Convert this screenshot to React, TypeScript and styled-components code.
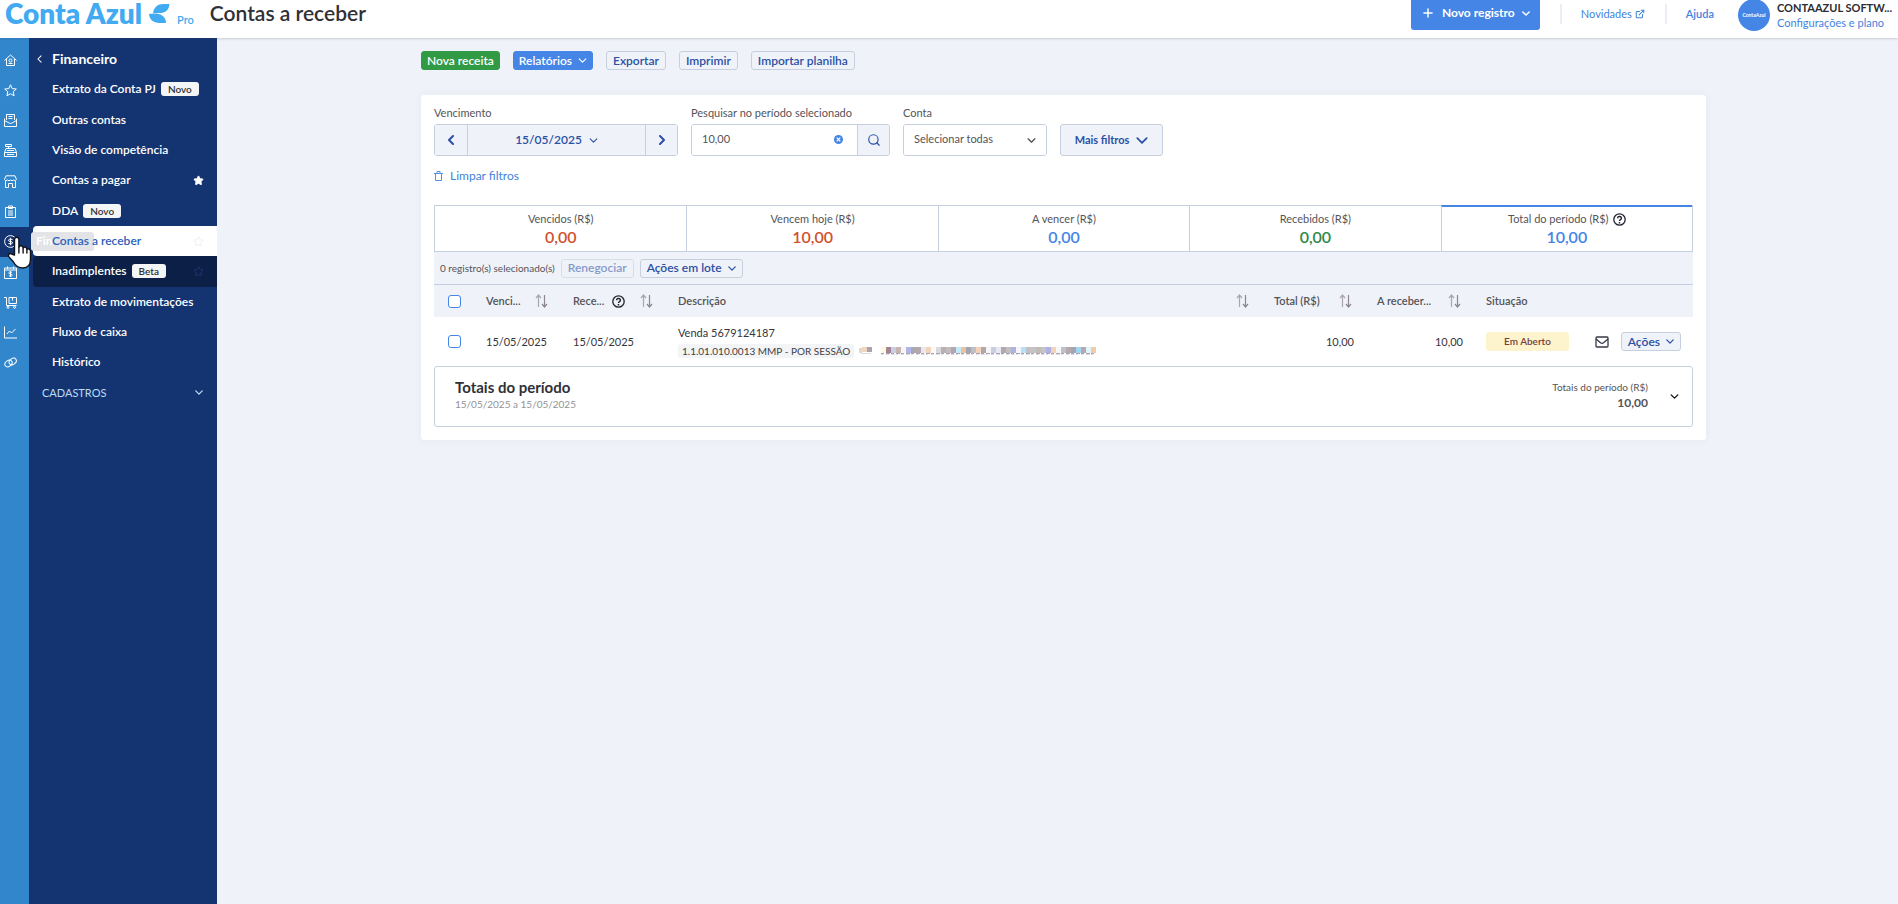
import React from "react";
import styled, { createGlobalStyle } from "styled-components";
import { ExternalLink, Plus, Search, Star } from "lucide-react";

const c = {
  rail: "#3287cc",
  navy: "#143371",
  navyDark: "#0c1f47",
  page: "#eff2f8",
  line: "#c6cfde",
  blue: "#4585e6",
  link: "#3f83dd",
  ink: "#2b50a5",
  text: "#545459",
  dark: "#35353a",
  green: "#319a45",
  red: "#d0522f",
};

const Global = createGlobalStyle`
  *, *::before, *::after { box-sizing: border-box; }
  body { margin: 0; background: ${c.page}; }
  body, button, input, select { font-family: Lato, "Liberation Sans", sans-serif; font-size: 12px; line-height: 16px; }
  body { color: ${c.text}; }
  button { cursor: pointer; padding: 0; }
  svg { flex: none; display: block; }
  a { color: ${c.link}; text-decoration: none; }
`;

const Page = styled.div`
  display: flex;
  flex-direction: column;
  min-height: 100vh;
`;
const Header = styled.header`
  display: flex;
  align-items: center;
  height: 38px;
  padding: 0 8px 12px 5px;
  background: #fff;
  box-shadow: 0 1px 2px rgba(60, 70, 90, 0.2);
  position: relative;
  z-index: 2;
`;
const Logo = styled.a`
  display: flex;
  align-items: center;
  gap: 7px;
  color: #41aaf0;
  font-size: 28px;
  line-height: 26px;
  font-weight: 800;
`;
const Plan = styled.span`
  align-self: flex-end;
  margin: 0 16px 0 7px;
  color: #41aaf0;
  font-weight: 600;
  line-height: 12px;
  font-size: 11px;
`;
const Title = styled.h1`
  flex: 1;
  margin: 0;
  color: #303036;
  font-size: 21px;
  line-height: 26px;
  font-weight: 600;
`;
const NewButton = styled.button`
  display: flex;
  align-items: center;
  justify-content: center;
  align-self: flex-start;
  flex: none;
  gap: 7px;
  width: 129px;
  height: 30px;
  padding-bottom: 4px;
  border: 0;
  border-radius: 0 0 3px 3px;
  background: ${c.blue};
  color: #fff;
  font-weight: 700;
`;
const HeaderLinks = styled.nav`
  display: flex;
  align-items: center;
  margin: 2px 24px 0 20px;
  height: 20px;
  font-size: 11px;
  a {
    display: flex;
    align-items: center;
    gap: 3px;
    padding-left: 19px;
    border-left: 2px solid #e9eef5;
    height: 20px;
  }
  a + a { margin-left: 20px; font-weight: 600; }
`;
const User = styled.div`
  display: flex;
  align-items: center;
  align-self: flex-start;
  gap: 7px;
  height: 30px;
`;
const Avatar = styled.span`
  display: grid;
  place-items: center;
  width: 32px;
  height: 32px;
  border-radius: 50%;
  background: ${c.blue};
  color: #fff;
  font-size: 5px;
  font-weight: 700;
`;
const UserText = styled.div`
  display: flex;
  flex-direction: column;
  font-size: 11px;
  line-height: 15px;
  width: 113px;
  white-space: nowrap;
  strong { color: #2c2c32; }
`;

const Body = styled.div`
  display: flex;
  flex: 1;
`;
const Rail = styled.nav`
  display: flex;
  flex-direction: column;
  width: 29px;
  padding-top: 7px;
  background: ${c.rail};
`;
const RailList = styled.div`
  display: grid;
  grid-auto-rows: 1fr;
  height: 333px;
`;
const RailButton = styled.button<{ $active?: boolean }>`
  display: flex;
  align-items: center;
  padding-left: 4px;
  border: 0;
  background: ${(p) => (p.$active ? c.navy : "transparent")};
  position: relative;
`;
const Tip = styled.span`
  position: absolute;
  left: 31px;
  top: 5px;
  z-index: 1;
  width: 63px;
  height: 19px;
  padding: 1px 5px;
  border-radius: 3px;
  background: #e2e4e8;
  color: #fff;
  font-weight: 700;
  text-align: left;
`;
const Pointer = styled.span`
  position: absolute;
  left: 7px;
  top: 9px;
  z-index: 4;
`;
const Side = styled.aside`
  width: 188px;
  padding-top: 6px;
  background: ${c.navy};
  color: #fff;
`;
const SideList = styled.div`
  display: grid;
  grid-auto-rows: 1fr;
  height: 364px;
`;
const SideHead = styled.button`
  display: flex;
  align-items: center;
  gap: 10px;
  padding-left: 8px;
  border: 0;
  background: none;
  color: #fff;
  font-size: 14px;
  font-weight: 700;
`;
const SideLink = styled.a<{ $tone?: "active" | "hover" }>`
  display: flex;
  align-items: center;
  gap: 5px;
  margin-left: 4px;
  padding: 0 13px 0 19px;
  border-radius: 4px 0 0 4px;
  background: ${(p) => (p.$tone === "active" ? "#fff" : p.$tone === "hover" ? c.navyDark : "none")};
  color: ${(p) => (p.$tone === "active" ? "#2c62b8" : "#fff")};
  font-weight: 600;
  white-space: nowrap;
  > span:first-child { position: relative; z-index: 2; }
  > svg { margin-left: auto; }
`;
const Pill = styled.span`
  padding: 0 7px;
  border-radius: 3px;
  background: #f4f5f7;
  color: #333;
  font-size: 10px;
  line-height: 14px;
  font-weight: 600;
`;
const SideGroup = styled.button`
  display: flex;
  align-items: center;
  justify-content: space-between;
  padding: 0 14px 0 13px;
  border: 0;
  background: none;
  color: #b9dcf8;
  font-size: 11px;
`;

const Main = styled.main`
  flex: 1;
  min-width: 0;
  padding: 13px 192px 13px 204px;
`;
const Toolbar = styled.div`
  display: flex;
  gap: 13px;
  margin-bottom: 25px;
`;
const Btn = styled.button<{ $kind?: "green" | "blue"; $muted?: boolean }>`
  display: inline-flex;
  align-items: center;
  justify-content: center;
  gap: 6px;
  height: 19px;
  padding: 0 ${(p) => (p.$kind ? 5 : 6)}px;
  border: 1px solid ${(p) => (p.$kind === "green" ? c.green : p.$kind === "blue" ? c.blue : c.line)};
  border-radius: 3px;
  background: ${(p) => (p.$kind === "green" ? c.green : p.$kind === "blue" ? c.blue : c.page)};
  color: ${(p) => (p.$kind ? "#fff" : c.ink)};
  font-weight: 600;
  opacity: ${(p) => (p.$muted ? 0.55 : 1)};
  white-space: nowrap;
`;
const Card = styled.section`
  padding: 10px 13px 13px;
  border-radius: 3px;
  background: #fff;
  box-shadow: 0 0 8px rgba(60, 80, 120, 0.06);
`;
const Filters = styled.div`
  display: flex;
  align-items: flex-end;
  gap: 13px;
`;
const Field = styled.div<{ $w: number }>`
  display: flex;
  flex-direction: column;
  gap: 3px;
  width: ${(p) => p.$w}px;
  font-size: 11px;
`;
const Group = styled.div`
  display: flex;
  height: 32px;
  border: 1px solid ${c.line};
  border-radius: 3px;
  overflow: hidden;
  position: relative;
`;
const Cell = styled.button<{ $grow?: boolean }>`
  display: flex;
  align-items: center;
  justify-content: center;
  gap: 7px;
  flex: ${(p) => (p.$grow ? "1" : "0 0 32px")};
  border: 0;
  background: ${c.page};
  color: ${c.ink};
  font-weight: 600;
  & + & { border-left: 1px solid ${c.line}; }
  input ~ & { border-left: 1px solid ${c.line}; }
`;
const TextInput = styled.input`
  flex: 1;
  min-width: 0;
  padding: 0 10px 2px;
  border: 0;
  outline: 0;
  color: ${c.text};
  font-size: 11px;
`;
const Clear = styled.button`
  position: absolute;
  right: 46px;
  top: 10px;
  border: 0;
  background: none;
`;
const Select = styled.select`
  flex: 1;
  padding: 0 10px 2px;
  appearance: none;
  border: 0;
  background: #fff;
  color: ${c.text};
  font-size: 11px;
`;
const Caret = styled.span`
  position: absolute;
  right: 10px;
  top: 13px;
  pointer-events: none;
`;
const More = styled.button`
  display: flex;
  align-items: center;
  justify-content: center;
  gap: 7px;
  width: 103px;
  height: 32px;
  border: 1px solid ${c.line};
  border-radius: 3px;
  background: ${c.page};
  color: ${c.ink};
  font-size: 11px;
  font-weight: 700;
`;
const Reset = styled.a`
  display: inline-flex;
  align-items: center;
  gap: 7px;
  margin: 12px 0 21px;
`;

const Summary = styled.div`
  display: grid;
  grid-template-columns: repeat(5, 1fr);
  border: 1px solid ${c.line};
  border-top: 0;
`;
const Tile = styled.button<{ $tint: string; $on?: boolean }>`
  display: flex;
  flex-direction: column;
  align-items: center;
  height: 46px;
  padding-top: ${(p) => (p.$on ? 4 : 5)}px;
  border: 0;
  border-top: ${(p) => (p.$on ? `2px solid ${c.blue}` : `1px solid ${c.line}`)};
  background: #fff;
  color: ${c.text};
  font-size: 11px;
  & + & { border-left: 1px solid ${c.line}; }
  span { display: flex; align-items: center; gap: 4px; }
  strong { color: ${(p) => p.$tint}; font-size: 16px; line-height: 20px; font-weight: 600; }
`;
const Batch = styled.div`
  display: flex;
  align-items: center;
  gap: 6px;
  height: 33px;
  padding-left: 6px;
  border-bottom: 1px solid ${c.line};
  background: ${c.page};
  font-size: 10px;
`;
const Table = styled.table`
  width: 100%;
  table-layout: fixed;
  border-collapse: collapse;
  font-size: 11px;
`;
const Col = styled.col<{ $w?: number }>`
  width: ${(p) => (p.$w ? `${p.$w}px` : "auto")};
`;
const Th = styled.th`
  height: 32px;
  padding: 0 14px 0 11px;
  background: ${c.page};
  text-align: left;
  font-size: 11px;
  font-weight: 600;
  white-space: nowrap;
`;
const HeadCell = styled.div`
  display: flex;
  align-items: center;
  gap: 8px;
  > svg:last-child { margin-left: auto; }
`;
const Td = styled.td<{ $right?: boolean }>`
  height: 49px;
  padding: 0 12px 0 11px;
  color: ${c.dark};
  text-align: ${(p) => (p.$right ? "right" : "left")};
`;
const Check = styled.input`
  display: block;
  appearance: none;
  width: 13px;
  height: 13px;
  margin: 0 3px;
  border: 1px solid ${c.blue};
  border-radius: 3px;
  background: #fff;
`;
const TagRow = styled.div`
  display: flex;
  align-items: center;
  gap: 5px;
  margin-top: 3px;
`;
const Tag = styled.span`
  padding: 0 4px;
  border-radius: 3px;
  background: #f3f4f6;
  color: #3f3f44;
  font-size: 10px;
  line-height: 14px;
`;
const Status = styled.span`
  display: block;
  width: 83px;
  border-radius: 3px;
  background: #fdf4ce;
  color: #74403a;
  font-size: 10px;
  font-weight: 600;
  line-height: 19px;
  text-align: center;
`;
const Actions = styled.div`
  display: flex;
  align-items: center;
  justify-content: flex-end;
  gap: 12px;
`;
const Plain = styled.button`
  border: 0;
  background: none;
`;
const Totals = styled.section`
  display: flex;
  align-items: center;
  height: 61px;
  padding: 0 13px 0 20px;
  border: 1px solid ${c.line};
  border-radius: 3px;
  h2 { margin: 0; color: #303036; font-size: 15px; line-height: 18px; font-weight: 700; }
`;
const TotalsHead = styled.div`
  display: flex;
  flex-direction: column;
  padding-bottom: 4px;
`;
const Period = styled.span`
  color: #929296;
  font-size: 10px;
`;
const TotalsValue = styled.div`
  display: flex;
  flex-direction: column;
  align-items: flex-end;
  margin: 0 22px 0 auto;
  padding-bottom: 4px;
  font-size: 10px;
  strong { font-size: 12px; }
`;

type Turn = "down" | "left" | "right";
const chevron: Record<Turn, { box: [number, number]; d: string }> = {
  down: { box: [10, 6], d: "M1 1l4 4 4-4" },
  left: { box: [6, 10], d: "M5 1 1 5l4 4" },
  right: { box: [6, 10], d: "M1 1l4 4-4 4" },
};
const Chevron = ({ to = "down", scale = 9, weight = 1.3 }: { to?: Turn; scale?: number; weight?: number }) => {
  const { box, d } = chevron[to];
  return (
    <svg
      width={Math.round((box[0] * scale) / 10)}
      height={Math.round((box[1] * scale) / 10)}
      viewBox={`0 0 ${box[0]} ${box[1]}`}
      fill="none"
      stroke="currentColor"
      strokeWidth={weight}
      strokeLinecap="round"
      strokeLinejoin="round"
      aria-hidden="true"
    >
      <path d={d} />
    </svg>
  );
};

const Leaf = () => (
  <svg width="21" height="19" viewBox="0 0 21 19" fill="#41aaf0" aria-hidden="true">
    <path d="M20.500 0H14C9 0 5 3 4 9h7.500C17 9 20 5.500 20.500 0Z" />
    <path d="M0 10c4-.8 9-.8 12 .8 3 1.600 5 4.200 5 8.200H10.500C4 19 .5 15.500 0 10Z" />
  </svg>
);

const Help = ({ size = 13 }: { size?: number }) => (
  <svg width={size} height={size} viewBox="0 0 13 13" fill="none" stroke="#222230" aria-hidden="true">
    <circle cx="6.500" cy="6.500" r="5.700" strokeWidth="1.300" />
    <path d="M4.600 5.200a1.900 1.700 0 1 1 2.900 1.400q-1 .6-1 1.300M6.500 9.100v1.300" strokeWidth="1.500" />
  </svg>
);

const Sort = () => (
  <svg width="13" height="14" viewBox="0 0 13 14" fill="none" stroke="#aaa6ae" strokeWidth="1.200" aria-hidden="true">
    <path d="M3.500 13V1M1 4l2.500-3L6 4" />
    <path d="M9.500 1v12M7 10l2.500 3 2.500-3" stroke="#8e8592" />
  </svg>
);

const Envelope = () => (
  <svg width="14" height="12" viewBox="0 0 14 12" fill="none" stroke="#363a46" strokeWidth="1.300" aria-hidden="true">
    <rect x="1" y="1" width="12" height="10" rx="1" />
    <path d="M1 3 5.500 6.800q1.500 1 3 0L13 3" />
  </svg>
);

const Trash = () => (
  <svg width="9" height="10" viewBox="0 0 9 10" fill="none" stroke="#4f93e6" aria-hidden="true">
    <path d="M0 2.500h9M3 2.500v-2h3v2M1.500 2.500v7h6v-7" />
  </svg>
);

const ClearIcon = () => (
  <svg width="9" height="9" viewBox="0 0 9 9" aria-hidden="true">
    <circle cx="4.500" cy="4.500" r="4.500" fill="#4585e6" />
    <path d="M2.700 2.700l3.600 3.600M6.300 2.700 2.700 6.300" stroke="#fff" strokeWidth="1.200" />
  </svg>
);

const Hand = () => (
  <svg width="25" height="34" viewBox="0 0 25 34" fill="#fff" stroke="#10131c" strokeWidth="1.400" strokeLinejoin="round" strokeLinecap="round" aria-hidden="true">
    <path d="M7.500 19V3.500a2.200 2.200 0 0 1 4.400 0V11q1-2 3-1 1.100.6 1.200 1.800 1-1.300 2.600-.5 1.200.6 1.200 1.900 1-.9 2.400-.1 1.200.8 1.200 2.400V23c0 6-3 9-7.500 9-5 0-7.500-2-9.500-6l-4.500-5c-1.500-2 .5-4.500 2.500-3Z" />
    <path d="M11.900 11v6M16.100 12v5M19.900 13.500V17" />
  </svg>
);

const mosaic = [
  "#fdf9dc", "#a58595", "#c7cfe0", "#c9b4b4", "#f7f5f5", "#b0b4e6", "#a9a9b5", "#b5a9ad", "#e8e8f2", "#f3d4b8", "#fafafa",
  "#dcd8dc", "#b9b0b0", "#c4bcc0", "#b0a8ac", "#c0ecfc", "#f0c09c", "#a2a6b2", "#c0c0c0", "#f3d4b8", "#b0a8ac", "#f6f6fa",
  "#c7cfe0", "#e8e8f2", "#b5a9ad", "#c0c0c0", "#b0b0e6", "#f6f6fa", "#b4e2fa", "#c4c0c4", "#c4c4c4", "#c0bcbc", "#c4c4c8",
  "#b0b0e6", "#f3d4b8", "#f8f8f8", "#c0c0c8", "#b5a9ad", "#a2a6b2", "#a0d8f4", "#b5a9ad", "#e0f4fc", "#f0cca8",
];
const Redacted = () => (
  <svg width="240" height="8" viewBox="0 0 240 8" aria-hidden="true">
    <rect x="0" y="1" width="3" height="5" fill="#dcd9d2" />
    <rect x="3" y="0" width="5" height="5" fill="#f0d6bd" />
    <rect x="8" y="0" width="5" height="5" fill="#aaa2ac" />
    <rect x="2" y="6" width="10" height="1" fill="#d9d9e0" />
    {mosaic.map((fill, i) => (
      <g key={i}>
        <rect x={22 + i * 5} y="0" width="5" height="6" fill={fill} />
        <rect x={22 + i * 5} y="6" width={3 + (i % 2)} height="1" fill="#aaa4b2" />
        <rect x={22 + i * 5} y="7" width={2 + (i % 3)} height="1" fill="#dedce4" />
      </g>
    ))}
  </svg>
);

const railIcons: { name: string; art: React.ReactNode }[] = [
  { name: "Início", art: <><path d="M.5 6.500 6.500 1l6 5.500M2.500 5v6.500h8V5" /><circle cx="6.500" cy="6.500" r="1.500" /><path d="M4.500 9.500h4" /></> },
  { name: "Favoritos", art: <path d="M6.500.8l1.700 3.800 4.100.4-3.100 2.700.9 4.100-3.600-2.100-3.600 2.100.9-4.100L.7 5l4.100-.4Z" /> },
  { name: "Mensagens", art: <><path d="M2.500 6V.5h8V6M4.500 2.500h4M4.500 4.500h4M.5 4.500v8h12v-8M.5 6.500 5 9q1.500 1 3 0l4.500-2.500" /></> },
  { name: "Vendas", art: <><path d="M1.500.5h6v2h-6zM4.500 2.500v2M.5 8.500l1.500-4h9l1.500 4v4H.5zM.5 8.500h12M3 6.500h7M3 10.500h7" /></> },
  { name: "Compras", art: <><path d="M2 .8h9l1.500 3.700q-1 2-3 .5-1.500 1.500-3 0-1.500 1.500-3 0-2 1.500-3-.5ZM1.500 6v6.500h3v-4h4v4h3V6" /></> },
  { name: "Contratos", art: <><path d="M1.500 2.500h10v10h-10zM4.500 1h4v2.500h-4zM4 6h5M4 8h5M4 10h5" /></> },
  { name: "Financeiro", art: <><circle cx="6.500" cy="6.500" r="5.900" /><path d="M8.500 4.500q-4-1.200-4 .7 0 1.300 2 1.300t2 1.300q0 2-4 .7M6.500 2.800v7.400" /></> },
  { name: "Cobranças", art: <><path d="M.5 2h12v10.500H.5zM.5 4h12M3.500.5v2.500M9.500.5v2.500M8 6.200q-3.200-.8-3.200.5T6.500 8t1.700 1.300q0 1.300-3.200.5M6.500 5.300v5.500" /></> },
  { name: "Estoque", art: <><path d="M0 1.500h2.500v8h10M5 1.500h7.500v6H5zM8.500 1.500v3" /><circle cx="4" cy="11.300" r="1" /><circle cx="10.500" cy="11.300" r="1" /></> },
  { name: "Relatórios", art: <path d="M.5.500v11.500h12.500M3 8l2.500-3 2 2 4-4" /> },
  { name: "Integrações", art: <><ellipse cx="4.500" cy="7.500" rx="3.900" ry="2.900" transform="rotate(-35 4.500 7.500)" /><ellipse cx="8.700" cy="5.500" rx="3.900" ry="2.900" transform="rotate(-35 8.700 5.500)" /></> },
];

type Nav = { label: string; pill?: string; tone?: "active" | "hover"; star?: string; fill?: string };
const nav: Nav[] = [
  { label: "Extrato da Conta PJ", pill: "Novo" },
  { label: "Outras contas" },
  { label: "Visão de competência" },
  { label: "Contas a pagar", star: "#fff", fill: "#fff" },
  { label: "DDA", pill: "Novo" },
  { label: "Contas a receber", tone: "active", star: "#eceef3" },
  { label: "Inadimplentes", pill: "Beta", tone: "hover", star: "#1d3874" },
  { label: "Extrato de movimentações" },
  { label: "Fluxo de caixa" },
  { label: "Histórico" },
];

const tiles = [
  { label: "Vencidos (R$)", value: "0,00", tint: c.red },
  { label: "Vencem hoje (R$)", value: "10,00", tint: c.red },
  { label: "A vencer (R$)", value: "0,00", tint: c.blue },
  { label: "Recebidos (R$)", value: "0,00", tint: "#31884a" },
  { label: "Total do período (R$)", value: "10,00", tint: c.blue, on: true },
];

export default function App() {
  return (
    <Page>
      <Global />
      <Header>
        <Logo href="#">
          Conta Azul
          <Leaf />
        </Logo>
        <Plan>Pro</Plan>
        <Title>Contas a receber</Title>
        <NewButton type="button">
          <Plus size={14} strokeWidth={2.5} />
          Novo registro
          <Chevron scale={8} weight={1.8} />
        </NewButton>
        <HeaderLinks>
          <a href="#">
            Novidades
            <ExternalLink size={10} strokeWidth={2.5} />
          </a>
          <a href="#">Ajuda</a>
        </HeaderLinks>
        <User>
          <Avatar>ContaAzul</Avatar>
          <UserText>
            <strong>CONTAAZUL SOFTW...</strong>
            <a href="#">Configurações e plano</a>
          </UserText>
        </User>
      </Header>

      <Body>
        <Rail>
          <RailList>
            {railIcons.map(({ name, art }) => (
              <RailButton key={name} type="button" aria-label={name} $active={name === "Financeiro"}>
                <svg width="13" height="13" viewBox="0 0 13 13" fill="none" stroke="#fff">
                  {art}
                </svg>
                {name === "Financeiro" && (
                  <>
                    <Tip>Fin</Tip>
                    <Pointer>
                      <Hand />
                    </Pointer>
                  </>
                )}
              </RailButton>
            ))}
          </RailList>
        </Rail>

        <Side>
          <SideList>
            <SideHead type="button">
              <Chevron to="left" scale={8} />
              Financeiro
            </SideHead>
            {nav.map((n) => (
              <SideLink key={n.label} href="#" $tone={n.tone}>
                <span>{n.label}</span>
                {n.pill && <Pill>{n.pill}</Pill>}
                {n.star && <Star size={11} color={n.star} fill={n.fill ?? "none"} />}
              </SideLink>
            ))}
            <SideGroup type="button">
              CADASTROS
              <Chevron scale={8} weight={1.6} />
            </SideGroup>
          </SideList>
        </Side>

        <Main>
          <Toolbar>
            <Btn type="button" $kind="green">Nova receita</Btn>
            <Btn type="button" $kind="blue">
              Relatórios
              <Chevron />
            </Btn>
            <Btn type="button">Exportar</Btn>
            <Btn type="button">Imprimir</Btn>
            <Btn type="button">Importar planilha</Btn>
          </Toolbar>

          <Card>
            <Filters>
              <Field $w={244}>
                <span id="due">Vencimento</span>
                <Group role="group" aria-labelledby="due">
                  <Cell type="button" aria-label="Período anterior">
                    <Chevron to="left" scale={10} weight={2} />
                  </Cell>
                  <Cell type="button" $grow>
                    15/05/2025
                    <Chevron />
                  </Cell>
                  <Cell type="button" aria-label="Próximo período">
                    <Chevron to="right" scale={10} weight={2} />
                  </Cell>
                </Group>
              </Field>
              <Field $w={199}>
                <label htmlFor="search">Pesquisar no período selecionado</label>
                <Group>
                  <TextInput id="search" defaultValue="10,00" />
                  <Clear type="button" aria-label="Limpar pesquisa">
                    <ClearIcon />
                  </Clear>
                  <Cell type="button" aria-label="Pesquisar">
                    <Search size={14} />
                  </Cell>
                </Group>
              </Field>
              <Field $w={144}>
                <label htmlFor="account">Conta</label>
                <Group>
                  <Select id="account">
                    <option>Selecionar todas</option>
                  </Select>
                  <Caret>
                    <Chevron weight={1.6} />
                  </Caret>
                </Group>
              </Field>
              <More type="button">
                Mais filtros
                <Chevron scale={12} weight={1.5} />
              </More>
            </Filters>
            <Reset href="#">
              <Trash />
              Limpar filtros
            </Reset>

            <Summary>
              {tiles.map((t) => (
                <Tile key={t.label} type="button" $tint={t.tint} $on={t.on}>
                  <span>
                    {t.label}
                    {t.on && <Help />}
                  </span>
                  <strong>{t.value}</strong>
                </Tile>
              ))}
            </Summary>
            <Batch>
              0 registro(s) selecionado(s)
              <Btn type="button" $muted>Renegociar</Btn>
              <Btn type="button">
                Ações em lote
                <Chevron scale={8} weight={1.6} />
              </Btn>
            </Batch>

            <Table>
              <colgroup>
                <Col $w={41} />
                <Col $w={87} />
                <Col $w={105} />
                <Col />
                <Col $w={103} />
                <Col $w={109} />
                <Col $w={105} />
                <Col $w={113} />
              </colgroup>
              <thead>
                <tr>
                  <Th><Check type="checkbox" aria-label="Selecionar todos" /></Th>
                  <Th><HeadCell>Venci...<Sort /></HeadCell></Th>
                  <Th><HeadCell>Rece...<Help /><Sort /></HeadCell></Th>
                  <Th><HeadCell>Descrição<Sort /></HeadCell></Th>
                  <Th><HeadCell>Total (R$)<Sort /></HeadCell></Th>
                  <Th><HeadCell>A receber...<Sort /></HeadCell></Th>
                  <Th>Situação</Th>
                  <Th aria-label="Ações" />
                </tr>
              </thead>
              <tbody>
                <tr>
                  <Td><Check type="checkbox" aria-label="Selecionar Venda 5679124187" /></Td>
                  <Td>15/05/2025</Td>
                  <Td>15/05/2025</Td>
                  <Td>
                    Venda 5679124187
                    <TagRow>
                      <Tag>1.1.01.010.0013 MMP - POR SESSÃO</Tag>
                      <Redacted />
                    </TagRow>
                  </Td>
                  <Td $right>10,00</Td>
                  <Td $right>10,00</Td>
                  <Td><Status>Em Aberto</Status></Td>
                  <Td>
                    <Actions>
                      <Plain type="button" aria-label="Enviar por e-mail"><Envelope /></Plain>
                      <Btn type="button">
                        Ações
                        <Chevron scale={8} weight={1.6} />
                      </Btn>
                    </Actions>
                  </Td>
                </tr>
              </tbody>
            </Table>

            <Totals>
              <TotalsHead>
                <h2>Totais do período</h2>
                <Period>15/05/2025 a 15/05/2025</Period>
              </TotalsHead>
              <TotalsValue>
                Totais do período (R$)
                <strong>10,00</strong>
              </TotalsValue>
              <Plain type="button" aria-label="Expandir totais">
                <Chevron weight={1.4} />
              </Plain>
            </Totals>
          </Card>
        </Main>
      </Body>
    </Page>
  );
}
